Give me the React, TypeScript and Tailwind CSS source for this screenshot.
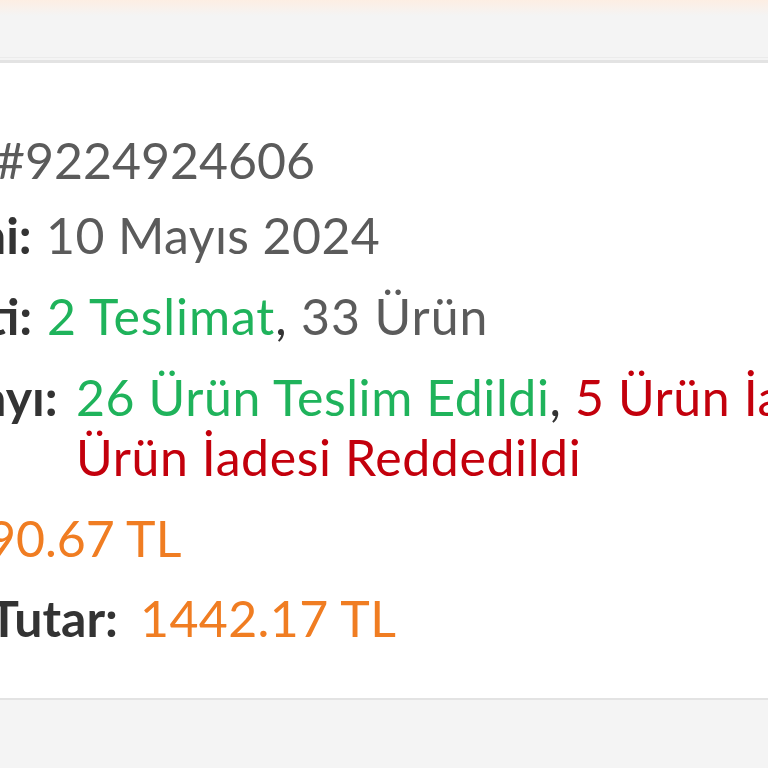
import React from 'react';

const Row: React.FC<{
  label: string;
  labelWidth: string;
  gap?: string;
  tracking?: string;
  className?: string;
  children: React.ReactNode;
}> = ({ label, labelWidth, gap = 'gap-[18px]', tracking = 'tracking-[0.6px]', className, children }) => (
  <div className={`flex ${gap} ${className ?? ''}`}>
    <span className={`shrink-0 whitespace-nowrap text-right font-bold text-[#333333] ${labelWidth}`}>{label}</span>
    <div className={`text-[#5b5b5b] ${tracking}`}>{children}</div>
  </div>
);

const App: React.FC = () => {
  return (
    <div className="h-[768px] w-[768px] overflow-hidden bg-[#f4f4f4] font-['Lato',sans-serif]">
      <div className="h-[16px] bg-gradient-to-b from-[#fdeee3] to-[#f4f4f4]" />
      <div className="h-[42px] border-b border-[#ebebeb]" />
      <div className="mt-[2px] border-t-[3px] border-b-[2px] border-[#e3e3e3] bg-white pt-[67px] pb-[50px]">
        <div className="ml-[-261px] flex flex-col text-[50px] leading-[60px]">
          <Row label="Sipariş No:" labelWidth="w-[239px]" tracking="tracking-normal">
            <span>#9224924606</span>
          </Row>
          <Row label="Sipariş Tarihi:" labelWidth="w-[289px]" tracking="tracking-[0.4px]" className="mt-[15px]">
            <span>10 Mayıs 2024</span>
          </Row>
          <Row label="Sipariş Özeti:" labelWidth="w-[290px]" tracking="tracking-[0.9px]" className="mt-[21px]">
            <span className="text-[#1fb35b]">2 Teslimat</span>
            <span className="text-[#333333]">,</span> 33 Ürün
          </Row>
          <Row label="Sipariş Detayı:" labelWidth="w-[309px]" gap="gap-[28px]" className="mt-[21px]">
            <span className="whitespace-nowrap">
              <span className="text-[#1fb35b]">26 Ürün Teslim Edildi</span>
              <span className="text-[#333333]">,</span>{' '}
              <span className="text-[#c3000c]">5 Ürün İade Edildi, 2</span>
            </span>
            <br />
            <span className="text-[#c3000c]">Ürün İadesi Reddedildi</span>
          </Row>
          <Row label="Ürünler:" labelWidth="w-[172px]" tracking="tracking-normal" className="mt-[21px]">
            <span className="text-[#f07d22]">1390.67 TL</span>
          </Row>
          <Row label="Toplam Tutar:" labelWidth="w-[379px]" gap="gap-[22px]" tracking="tracking-[0.4px]" className="mt-[20px]">
            <span className="text-[#f07d22]">1442.17 TL</span>
          </Row>
        </div>
      </div>
    </div>
  );
};

export default App;
